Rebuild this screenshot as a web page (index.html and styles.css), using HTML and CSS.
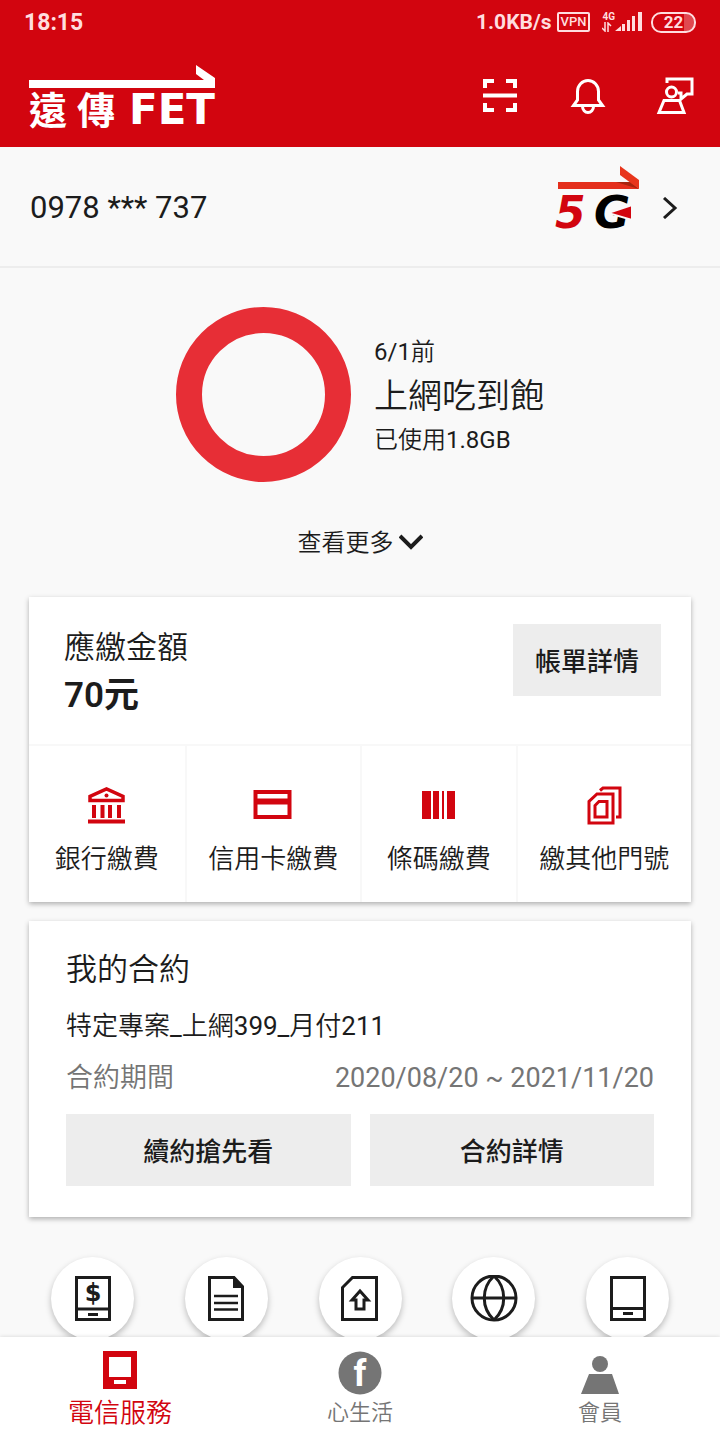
FILE: index.html
```html
<!DOCTYPE html>
<html lang="zh-Hant">

<head>
    <meta charset="UTF-8">
    <meta name="viewport" content="width=device-width, initial-scale=1.0">
    <title>遠傳 FET</title>
    <link rel="stylesheet" href="styles.css">
</head>

<body>

    <header class="header">
        <div class="status">
            <span class="time">18:15</span>
            <div class="status-right">
                <span class="speed">1.0KB/s</span>
                <span class="vpn">VPN</span>
                <div class="signal">
                    <div class="network">
                        <span>4G</span>
                        <svg width="10" height="10" viewBox="0 0 10 10" fill="none" stroke="currentColor" stroke-width="1.5"><path d="M3 0v9L0 6M6 10V1l3 3"/></svg>
                    </div>
                    <svg width="28" height="20" viewBox="0 0 28 20" fill="currentColor"><path d="M0 19l6-5v5zM7 12h3v7H7zM12 8h3v11h-3zM17 4h3v15h-3zM23 0h4v19h-4z"/></svg>
                </div>
                <span class="battery">22</span>
            </div>
        </div>
        <div class="appbar">
            <a class="logo" href="#">
                <svg width="186" height="23" viewBox="0 0 186 23" fill="currentColor"><path d="M167 0l19 13v10H0v-8h175l-8-6z"/></svg>
                <span class="logo-text"><span class="logo-zh"><span>遠</span><span>傳</span></span><span class="logo-en">FET</span></span>
            </a>
            <div class="actions">
                <button class="icon-btn" aria-label="掃描">
                    <svg width="44" height="44" viewBox="0 0 44 44" fill="none" stroke="currentColor" stroke-width="4"><path d="M7 14V7h9M28 7h9v7M7 29v7h9M28 36h9v-7M5 21.500h34"/></svg>
                </button>
                <button class="icon-btn" aria-label="通知">
                    <svg width="44" height="44" viewBox="0 0 44 44" fill="none" stroke="currentColor" stroke-width="3"><path d="M11.500 26V17.500a10.500 11 0 0 1 21 0V26l4 5.500h-29zM16.500 32.500a5.500 6 0 0 0 11 0"/></svg>
                </button>
                <button class="icon-btn" aria-label="客服">
                    <svg width="44" height="44" viewBox="0 0 44 44" fill="none" stroke="currentColor" stroke-width="3"><path d="M13 9V5h25v15h-5l-6 5v-6h-3"/><circle cx="17.500" cy="18" r="5"/><path d="M10 26.500h15.500L30 38.500H5z"/></svg>
                </button>
            </div>
        </div>
    </header>

    <main class="main">
        <a class="account" href="#">
            <span class="phone">0978 *** 737</span>
            <span class="plan">
                <svg class="logo-5g" width="94" height="76" viewBox="0 0 94 76">
                    <path d="M10 16h73l8 7H10z" fill="#e42f1c"/>
                    <path d="M68 16h15l8 7z" fill="#a8240f"/>
                    <path d="M72 0l19 14v9L72 9z" fill="#e8351c"/>
                    <text x="7" y="62" fill="#d2050f">5</text>
                    <text x="46" y="62" fill="#000">G</text>
                    <path d="M60 47l24-8v15z" fill="#d2050f" stroke="#f9f9f9" stroke-width="2"/>
                </svg>
                <svg width="18" height="22" viewBox="0 0 18 22" fill="none" stroke="#1c1c1c" stroke-width="3"><path d="M2 1l11 10L2 21"/></svg>
            </span>
        </a>

        <section class="usage">
            <div class="usage-row">
                <div class="ring"></div>
                <div class="usage-text">
                    <p><span class="num">6/1</span>前</p>
                    <p class="usage-title">上網吃到飽</p>
                    <p>已使用<span class="num">1.8GB</span></p>
                </div>
            </div>
            <button class="more">查看更多
                <svg width="24" height="20" viewBox="0 0 24 20" fill="none" stroke="currentColor" stroke-width="4"><path d="M1 3l11 11L23 3"/></svg>
            </button>
        </section>

        <section class="card">
            <div class="bill">
                <div>
                    <h2>應繳金額</h2>
                    <p class="amount">70元</p>
                </div>
                <button class="btn">帳單詳情</button>
            </div>
            <div class="pay">
                <a href="#">
                    <svg width="40" height="40" viewBox="0 0 40 40" fill="none" stroke="currentColor" stroke-width="4"><path d="M3 14.500v-4L19.500 3 36 10.500v4z" stroke-width="3.500"/><path d="M7 19v13M15.500 19v13M23 19v13M32 19v13M1 35.500h37"/><circle cx="19.500" cy="9.500" r="2" fill="currentColor" stroke="none"/></svg>
                    銀行繳費
                </a>
                <a href="#">
                    <svg width="40" height="40" viewBox="0 0 40 40" fill="none" stroke="currentColor" stroke-width="4"><path d="M2.500 6h34v25h-34z"/><path d="M2 15.500h34" stroke-width="6"/></svg>
                    信用卡繳費
                </a>
                <a href="#">
                    <svg width="40" height="40" viewBox="0 0 40 40" fill="currentColor"><path d="M3 5h9v28H3zM14 5h6v28h-6zM23 5h2v28h-2zM28 5h8v28h-8z"/></svg>
                    條碼繳費
                </a>
                <a href="#">
                    <svg width="40" height="40" viewBox="0 0 40 40" fill="none" stroke="currentColor" stroke-width="3"><path d="M5 37V15.500l8-7.500h16v29zM11 31V19.500l4-4h8V31z"/><path d="M16 4.500l3-2.500h17v29h-4"/></svg>
                    繳其他門號
                </a>
            </div>
        </section>

        <section class="card contract">
            <h2>我的合約</h2>
            <p class="project">特定專案<span class="num">_</span>上網<span class="num">399_</span>月付<span class="num">211</span></p>
            <p class="period"><span>合約期間</span><span class="num">2020/08/20 ~ 2021/11/20</span></p>
            <div class="buttons">
                <button class="btn">續約搶先看</button>
                <button class="btn">合約詳情</button>
            </div>
        </section>

        <div class="shortcuts">
            <button class="round" aria-label="手機帳單">
                <svg width="48" height="48" viewBox="0 0 48 48" fill="none" stroke="currentColor" stroke-width="3"><path d="M7.500 2.500h33v42h-33zM7 34h34M19 39.500h10"/><text class="dollar" x="24" y="26">$</text></svg>
            </button>
            <button class="round" aria-label="合約文件">
                <svg width="48" height="48" viewBox="0 0 48 48" fill="none" stroke="currentColor" stroke-width="3"><path d="M7.500 2.500H32l8.500 9v33h-33z"/><path d="M31 2l10 11H31z" fill="currentColor" stroke="none"/><path d="M12 21h24M12 28h24M12 34.500h24" stroke-width="2.500"/></svg>
            </button>
            <button class="round" aria-label="SIM 卡升級">
                <svg width="48" height="48" viewBox="0 0 48 48" fill="none" stroke="currentColor" stroke-width="3"><path d="M6.500 44.500v-32l10-10h24v42z"/><path d="M24 16l8 9h-4v9h-8v-9h-4z"/></svg>
            </button>
            <button class="round" aria-label="國際漫遊">
                <svg width="48" height="48" viewBox="0 0 48 48" fill="none" stroke="currentColor" stroke-width="3"><circle cx="24" cy="23" r="22"/><path d="M2 23h44M24 1c-13 12-13 32 0 44M24 1c13 12 13 32 0 44"/></svg>
            </button>
            <button class="round" aria-label="手機">
                <svg width="48" height="48" viewBox="0 0 48 48" fill="none" stroke="currentColor" stroke-width="3"><path d="M7.500 2.500h33v42h-33zM7 33.500h34M19 38.500h10"/></svg>
            </button>
        </div>
    </main>

    <nav class="tabs">
        <a class="active" href="#">
            <svg width="44" height="44" viewBox="0 0 44 44"><path d="M5 0h34v38H5z" fill="currentColor"/><path d="M11 6h22v20H11zM16 29h12v4H16z" fill="#fff"/></svg>
            電信服務
        </a>
        <a href="#">
            <svg width="44" height="44" viewBox="0 0 44 44"><circle cx="22" cy="22" r="21.500" fill="currentColor"/><text class="letter" x="22" y="35">f</text></svg>
            心生活
        </a>
        <a href="#">
            <svg width="44" height="44" viewBox="0 0 44 44" fill="currentColor"><circle cx="22" cy="13" r="8"/><path d="M11 23h23l7 20H3z"/></svg>
            會員
        </a>
    </nav>

</body>

</html>
```
FILE: styles.css
```css
*{
    margin: 0;
    padding: 0;
    box-sizing: border-box;
}
body{
    height: 100vh;
    display: flex;
    flex-direction: column;
    background: #F9F9F9;
    color: #1C1C1C;
    font-family: Roboto, "Noto Sans CJK TC", sans-serif;
    font-size: 26px;
    font-weight: 350;
}
svg{
    display: block;
    flex-shrink: 0;
}
a{
    color: inherit;
    text-decoration: none;
}
button{
    border: none;
    background: none;
    color: inherit;
    font: inherit;
    cursor: pointer;
}
h2{
    font-size: 31px;
    font-weight: 350;
    line-height: 48px;
}
.num{
    font-weight: 400;
}

/* header */
.header{
    background: #D2050F;
    color: #fff;
}
.status{
    display: flex;
    justify-content: space-between;
    align-items: center;
    height: 44px;
    padding: 0 24px;
    color: #FFDDDF;
    font-weight: 700;
}
.time{
    font-size: 23px;
}
.status-right{
    display: flex;
    align-items: center;
}
.speed{
    font-size: 21px;
}
.vpn{
    margin: 0 12px 0 5px;
    padding: 0 2px;
    border: 2px solid;
    border-radius: 2px;
    font-size: 13px;
    font-weight: 500;
    line-height: 16px;
}
.signal{
    display: flex;
    align-items: center;
    margin-right: 8px;
}
.network{
    display: flex;
    flex-direction: column;
    font-size: 10px;
    line-height: 10px;
}
.battery{
    width: 45px;
    border: 2px solid;
    border-radius: 10px;
    background: linear-gradient(to right, transparent 75%, #E04850 75%);
    font-size: 17px;
    line-height: 17px;
    text-align: center;
}
.appbar{
    display: flex;
    justify-content: space-between;
    height: 103px;
    padding: 21px 22px 0 29px;
}
.logo-text{
    display: flex;
    justify-content: space-between;
    align-items: flex-start;
    height: 44px;
}
.logo-zh{
    display: flex;
    gap: 10px;
    font-family: "Noto Sans CJK TC", sans-serif;
    font-size: 38px;
    font-weight: 700;
    line-height: 40px;
}
.logo-en{
    font-family: "DejaVu Sans", sans-serif;
    font-size: 42px;
    font-weight: 700;
    line-height: 44px;
}
.actions{
    display: flex;
    gap: 44px;
    padding-top: 9px;
}
.icon-btn{
    height: 44px;
}

/* content */
.main{
    flex: 1;
    min-height: 0;
    overflow-y: auto;
    scrollbar-width: none;
}
.account{
    display: flex;
    justify-content: space-between;
    align-items: center;
    height: 121px;
    padding: 2px 40px 0 30px;
    border-bottom: 2px solid #EDEDED;
}
.phone{
    font-size: 31px;
    font-weight: 400;
}
.plan{
    display: flex;
    align-items: center;
    gap: 20px;
}
.logo-5g{
    margin-bottom: 8px;
    font-family: "DejaVu Sans", sans-serif;
    font-size: 44px;
    font-style: italic;
    font-weight: 700;
}
.usage{
    display: flex;
    flex-direction: column;
    align-items: center;
    gap: 41px;
    padding: 39px 0 34px;
}
.usage-row{
    display: flex;
    align-items: center;
    gap: 23px;
}
.ring{
    width: 175px;
    height: 175px;
    border: 26px solid #E72E36;
    border-radius: 50%;
}
.usage-text{
    padding-top: 2px;
    font-size: 24px;
    line-height: 32px;
}
.usage-text .usage-title{
    font-size: 34px;
    line-height: 56px;
}
.more{
    display: flex;
    align-items: center;
    gap: 5px;
    font-size: 24px;
    line-height: 40px;
}
.card{
    margin: 0 29px 19px;
    background: #fff;
    box-shadow: 0 2px 5px rgba(0, 0, 0, 0.3);
}
.bill{
    display: flex;
    justify-content: space-between;
    align-items: flex-start;
    padding: 27px 30px 24px 35px;
}
.amount{
    font-size: 35px;
    font-weight: 600;
    line-height: 48px;
}
.btn{
    height: 72px;
    padding: 0 22px 2px;
    background: #EDEDED;
    font-weight: 500;
}
.pay{
    display: grid;
    grid-template-columns: 8fr 9fr 8fr 9fr;
    border-top: 2px solid #F8F8F8;
    line-height: 34px;
}
.pay a{
    display: flex;
    flex-direction: column;
    align-items: center;
    gap: 16px;
    padding: 40px 0 26px;
}
.pay a + a{
    border-left: 2px solid #F8F8F8;
}
.pay svg{
    color: #D2050F;
}
.contract{
    padding: 25px 37px 31px;
}
.project{
    padding-top: 6px;
    line-height: 52px;
}
.period{
    display: flex;
    justify-content: space-between;
    color: #757575;
    font-size: 27px;
    line-height: 52px;
}
.buttons{
    display: grid;
    grid-template-columns: 1fr 1fr;
    gap: 19px;
    padding-top: 10px;
}
.shortcuts{
    display: flex;
    justify-content: space-between;
    padding: 21px 51px 24px;
}
.round{
    display: flex;
    justify-content: center;
    align-items: center;
    width: 83px;
    height: 83px;
    border-radius: 50%;
    background: #fff;
    box-shadow: 0 3px 6px rgba(0, 0, 0, 0.25);
}
.dollar{
    fill: currentColor;
    stroke: none;
    font-family: "DejaVu Sans", sans-serif;
    font-size: 24px;
    font-weight: 700;
    text-anchor: middle;
}

/* bottom tabs */
.tabs{
    display: grid;
    grid-template-columns: 1fr 1fr 1fr;
    height: 103px;
    padding-top: 14px;
    background: #fff;
    box-shadow: 0 0 4px rgba(0, 0, 0, 0.15);
    color: #757575;
    font-size: 22px;
    line-height: 32px;
    z-index: 1;
}
.tabs a{
    display: flex;
    flex-direction: column;
    align-items: center;
    gap: 2px;
}
.tabs .active{
    color: #D2050F;
    font-size: 26px;
}
.letter{
    fill: #fff;
    font-size: 36px;
    font-weight: 700;
    text-anchor: middle;
}
```
